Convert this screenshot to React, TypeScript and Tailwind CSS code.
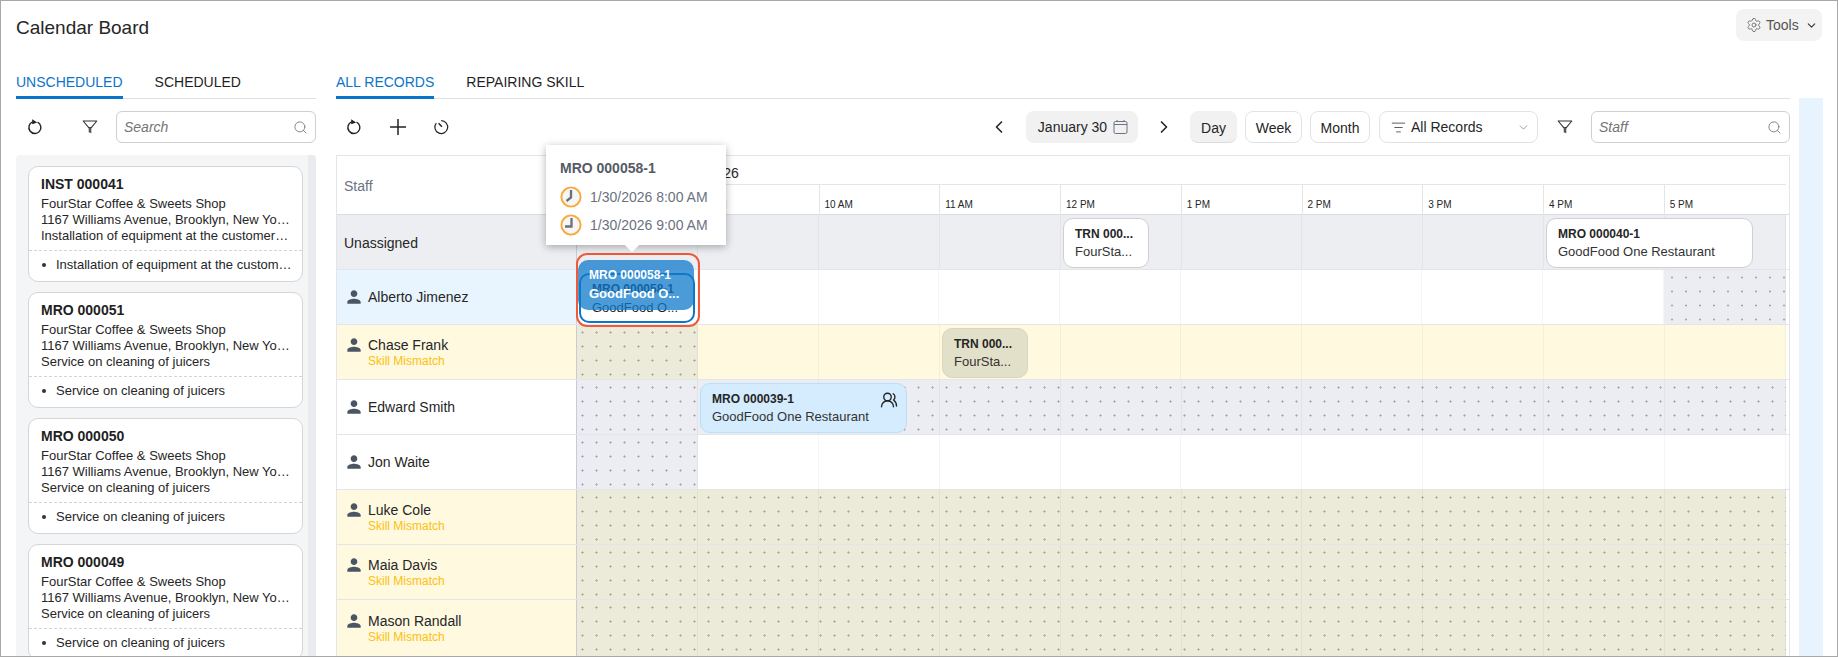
import { ChevronDown, ChevronLeft, ChevronRight, ListFilter, Search, Settings, UsersRound } from "lucide-react";

const font = { fontFamily: '"Liberation Sans", Arial, sans-serif' };

const hours = ["8 AM", "9 AM", "10 AM", "11 AM", "12 PM", "1 PM", "2 PM", "3 PM", "4 PM", "5 PM"];

const cards = [
  { id: "INST 000041", desc: "Installation of equipment at the customer's location", item: "Installation of equipment at the customer's location" },
  { id: "MRO 000051", desc: "Service on cleaning of juicers", item: "Service on cleaning of juicers" },
  { id: "MRO 000050", desc: "Service on cleaning of juicers", item: "Service on cleaning of juicers" },
  { id: "MRO 000049", desc: "Service on cleaning of juicers", item: "Service on cleaning of juicers" },
];

const grayDots =
  "bg-[#ecedf2] bg-[radial-gradient(circle_at_5.5px_7.5px,#a3a4a9_0.9px,transparent_1.2px)] bg-[length:14px_14px]";
const oliveDots =
  "bg-[#ecead8] bg-[radial-gradient(circle_at_5.5px_7.5px,#a6a698_0.9px,transparent_1.2px)] bg-[length:14px_14px]";
const grayDotsLate =
  "bg-[#ecedf2] bg-[radial-gradient(circle_at_8px_7.5px,#a3a4a9_0.9px,transparent_1.2px)] bg-[length:14px_14px]";

const spanClass: Record<number, string> = {
  1: "col-span-1",
  9: "col-span-9",
  10: "col-span-10",
};

type Row = {
  name: string;
  mismatch?: boolean;
  leftBg: string;
  segments: { span: number; cls: string }[];
};

const rows: Row[] = [
  { name: "Unassigned", leftBg: "bg-[#edeef2]", segments: [{ span: 10, cls: "bg-[#edeef2]" }] },
  {
    name: "Alberto Jimenez",
    leftBg: "bg-[#e8f5fe]",
    segments: [
      { span: 9, cls: "bg-white" },
      { span: 1, cls: grayDotsLate },
    ],
  },
  {
    name: "Chase Frank",
    mismatch: true,
    leftBg: "bg-[#fff9e0]",
    segments: [
      { span: 1, cls: oliveDots },
      { span: 9, cls: "bg-[#fff9e0]" },
    ],
  },
  { name: "Edward Smith", leftBg: "bg-white", segments: [{ span: 10, cls: grayDots }] },
  {
    name: "Jon Waite",
    leftBg: "bg-white",
    segments: [
      { span: 1, cls: grayDots },
      { span: 9, cls: "bg-white" },
    ],
  },
  { name: "Luke Cole", mismatch: true, leftBg: "bg-[#fff9e0]", segments: [{ span: 10, cls: oliveDots }] },
  { name: "Maia Davis", mismatch: true, leftBg: "bg-[#fff9e0]", segments: [{ span: 10, cls: oliveDots }] },
  { name: "Mason Randall", mismatch: true, leftBg: "bg-[#fff9e0]", segments: [{ span: 10, cls: oliveDots }] },
];

function RefreshIcon() {
  return (
    <svg width="18" height="18" viewBox="0 0 18 18" fill="none">
      <path d="M6.6 3.9a6 6 0 1 0 5 .2" stroke="#222" strokeWidth="1.4" />
      <path d="M6.2 1.2l5 3.2-5 1.8z" fill="#222" />
    </svg>
  );
}

function TimerIcon() {
  return (
    <svg width="18" height="18" viewBox="0 0 18 18" fill="none" stroke="#222" strokeWidth="1.2">
      <path d="M8.2 2.7a6.4 6.4 0 1 1-4.9 2.4" />
      <path d="M5.6 5.2l3.3 3.6" strokeWidth="1.4" />
    </svg>
  );
}

function PlusIcon() {
  return (
    <svg width="18" height="18" viewBox="0 0 18 18" stroke="#222" strokeWidth="1.5">
      <path d="M9 1v16M1 9h16" />
    </svg>
  );
}

function FunnelIcon() {
  return (
    <svg width="16" height="16" viewBox="0 0 16 16" fill="none">
      <path d="M1.2 2h13.6L9.3 8.6H6.7z" stroke="#333" strokeWidth="1.1" strokeLinejoin="round" />
      <path d="M6.7 8.6h2.6v5.6l-2.6-.9z" fill="#555" />
    </svg>
  );
}

function CalendarIcon() {
  return (
    <svg width="15" height="16" viewBox="0 0 15 16" fill="none" stroke="#6b7280" strokeWidth="1">
      <rect x="1" y="2.5" width="13" height="12" rx="1.5" />
      <path d="M1 5.5h13M4 1v1.5M11 1v1.5" />
    </svg>
  );
}

function PersonIcon() {
  return (
    <svg width="20" height="20" viewBox="0 0 24 24" fill="#4b5563" className="shrink-0">
      <path d="M12 12c2.2 0 4-1.8 4-4s-1.8-4-4-4-4 1.8-4 4 1.8 4 4 4zm0 2c-2.7 0-8 1.3-8 4v2h16v-2c0-2.7-5.3-4-8-4z" />
    </svg>
  );
}

function ClockIcon({ hand }: { hand: string }) {
  return (
    <svg width="22" height="22" viewBox="0 0 22 22" fill="none" className="shrink-0">
      <circle cx="11" cy="11" r="9.6" fill="#f6f6f7" stroke="#f9a93a" strokeWidth="1.9" />
      <path d={hand} stroke="#6b6f76" strokeWidth="2.3" />
    </svg>
  );
}

function SearchBox({ placeholder, width }: { placeholder: string; width: string }) {
  return (
    <div className={`flex h-8 items-center rounded-md border border-[#cfcfcf] bg-white pl-[7px] pr-[7px] ${width}`}>
      <input
        readOnly
        placeholder={placeholder}
        className="w-full min-w-0 text-sm italic outline-none placeholder:text-[#757575]"
        style={font}
      />
      <Search size={15} strokeWidth={1.4} className="shrink-0 text-[#777]" />
    </div>
  );
}

function Tab({ label, active }: { label: string; active?: boolean }) {
  return (
    <div
      className={
        active
          ? "flex h-[33px] items-center border-b-[3px] border-[#0a74c9] pt-[1px] text-sm text-[#0a74c9]"
          : "flex h-[33px] items-center pb-[2px] text-sm text-[#1f1f1f]"
      }
    >
      {label}
    </div>
  );
}

function WorkCard({ id, desc, item }: { id: string; desc: string; item: string }) {
  return (
    <div className="h-[116px] w-[275px] shrink-0 rounded-[10px] border border-[#d6d6d6] bg-white">
      <div className="h-[84px] border-b border-dashed border-[#d4d4d4] pl-3 pr-[12px] pt-[9px] text-[13px] leading-4 text-[#262626]">
        <div className="text-sm font-bold leading-[17px] text-[#1f1f1f]">{id}</div>
        <div className="mt-[3px] truncate">FourStar Coffee & Sweets Shop</div>
        <div className="truncate">1167 Williams Avenue, Brooklyn, New York, 11201</div>
        <div className="truncate">{desc}</div>
      </div>
      <div className="flex h-[28px] items-center pl-[13px] pr-[10px] text-[13px] text-[#262626]">
        <span className="mr-[10px] h-1 w-1 shrink-0 rounded-full bg-[#333]" />
        <span className="truncate">{item}</span>
      </div>
    </div>
  );
}

function EventCard({ title, sub, cls, icon }: { title: string; sub: string; cls: string; icon?: boolean }) {
  return (
    <div className={`absolute top-[3px] z-10 h-[50px] rounded-[10px] border pl-[11px] pt-[7px] ${cls}`}>
      <div className="text-xs font-bold leading-[17px] text-[#262626]">{title}</div>
      <div className="text-[13px] leading-[17px] text-[#333]">{sub}</div>
      {icon && <UsersRound size={18} strokeWidth={1.8} className="absolute right-[8px] top-[7px] text-[#222]" />}
    </div>
  );
}

function DragStack() {
  return (
    <>
      <div className="absolute left-[-1px] top-[-17px] z-10 h-[74px] w-[124px] rounded-[11px] border-2 border-[#f0593a]" />
      <div className="absolute left-[2px] top-[3px] z-10 h-[50px] w-[116px] rounded-[10px] border-2 border-[#0a78c8] bg-white pl-[11px] pt-[5px]">
        <div className="text-xs font-bold leading-[18px] text-[#1f1f1f]">MRO 000058-1</div>
        <div className="text-[13px] leading-[19px] text-[#1f1f1f]">GoodFood O...</div>
      </div>
      <div className="absolute left-[1px] top-[-10px] z-10 h-[50px] w-[116px] rounded-[10px] bg-[#0f7acc]/75 pl-[11px] pt-[6px] text-white">
        <div className="text-xs font-bold leading-[18px]">MRO 000058-1</div>
        <div className="text-[13px] font-bold leading-[19px]">GoodFood O...</div>
      </div>
    </>
  );
}

function TimelineRow({ row, index }: { row: Row; index: number }) {
  return (
    <div className="flex h-[55px] border-b border-[#e4e5e9] last:h-[56px] last:border-b-0">
      <div className={`flex w-[240px] shrink-0 flex-col justify-center border-r border-[#c9ccd4] ${row.leftBg}`}>
        {row.name === "Unassigned" ? (
          <div className="pl-[7px] pt-[2px] text-sm text-[#262626]">{row.name}</div>
        ) : (
          <>
            <div className="flex h-[18px] items-center gap-1 pl-[7px] text-sm text-[#262626]">
              <PersonIcon />
              {row.name}
            </div>
            {row.mismatch && <div className="h-[15px] pl-[31px] text-xs leading-[15px] text-[#fdc010]">Skill Mismatch</div>}
          </>
        )}
      </div>
      <div className="relative grid w-[1209px] grid-cols-[repeat(9,120.75px)_1fr]">
        {row.segments.map((s, i) => (
          <div key={i} className={`flex ${spanClass[s.span]} ${s.cls}`}>
            {Array.from({ length: s.span }).map((_, c) => (
              <div key={c} className="flex-1 border-r border-black/[0.04]" />
            ))}
          </div>
        ))}
        {index === 0 && (
          <>
            <EventCard title="TRN 000..." sub="FourSta..." cls="left-[486px] w-[86px] border-[#cfcfd4] bg-white" />
            <EventCard title="MRO 000040-1" sub="GoodFood One Restaurant" cls="left-[969px] w-[207px] border-[#cfcfd4] bg-white" />
          </>
        )}
        {index === 1 && <DragStack />}
        {index === 2 && <EventCard title="TRN 000..." sub="FourSta..." cls="left-[365px] w-[86px] border-[#d9d6bd] bg-[#e3e0c9]" />}
        {index === 3 && (
          <EventCard title="MRO 000039-1" sub="GoodFood One Restaurant" cls="left-[123px] w-[207px] border-[#b9e0f9] bg-[#d4ecfd]" icon />
        )}
      </div>
    </div>
  );
}

function Tooltip() {
  return (
    <div className="absolute left-[210px] top-[-10px] z-20 h-[100px] w-[180px] bg-white pl-[14px] pt-[14px] shadow-[0_2px_8px_rgba(0,0,0,0.3)]">
      <div className="absolute bottom-[-5px] left-[81px] h-[10px] w-[10px] rotate-45 bg-white" />
      <div className="relative text-sm font-bold leading-[18px] text-[#555b66]">MRO 000058-1</div>
      <div className="relative mt-[6px] flex h-7 items-center gap-2 text-sm text-[#6b7280]">
        <ClockIcon hand="M11 4V11.5L6.5 15" />
        1/30/2026 8:00 AM
      </div>
      <div className="relative flex h-7 items-center gap-2 text-sm text-[#6b7280]">
        <ClockIcon hand="M11.5 4V12.5H5" />
        1/30/2026 9:00 AM
      </div>
    </div>
  );
}

export default function App() {
  return (
    <div className="h-[657px] w-full overflow-hidden border border-[#a8a8a8] bg-white" style={font}>
      <div className="flex h-[65px] items-start justify-between pl-[15px] pr-[15px]">
        <h1 className="mt-[16px] text-[19px] leading-[22px] text-[#262626]">Calendar Board</h1>
        <div className="mt-2 flex h-8 w-[86px] items-center rounded-lg bg-[#f3f3f3] pl-[10px] text-sm text-[#555]">
          <Settings size={16} strokeWidth={1.1} className="mr-1" />
          Tools
          <ChevronDown size={13} strokeWidth={2} className="ml-[6px] text-[#333]" />
        </div>
      </div>

      <div className="flex pl-[15px]">
        {/* Work order list */}
        <div className="w-[300px] shrink-0">
          <div className="flex h-[33px] gap-[32px] border-b border-[#e0e0e0]">
            <Tab label="UNSCHEDULED" active />
            <Tab label="SCHEDULED" />
          </div>
          <div className="flex h-[56px] items-center">
            <div className="flex h-8 w-[38px] items-center justify-center"><RefreshIcon /></div>
            <div className="ml-[18px] flex h-8 w-9 items-center justify-center"><FunnelIcon /></div>
            <div className="ml-2"><SearchBox placeholder="Search" width="w-[200px]" /></div>
          </div>
          <div className="flex h-[502px] overflow-hidden rounded-t bg-[#f4f5f7]">
            <div className="flex w-[292px] flex-col gap-[10px] pl-3 pt-[11px]">
              {cards.map((c) => (
                <WorkCard key={c.id} {...c} />
              ))}
            </div>
            <div className="w-2 bg-[#e9ebee]" />
          </div>
        </div>

        {/* Calendar */}
        <div className="ml-5 w-[1454px] shrink-0">
          <div className="flex h-[33px] gap-[32px] border-b border-[#e0e0e0]">
            <Tab label="ALL RECORDS" active />
            <Tab label="REPAIRING SKILL" />
          </div>
          <div className="flex h-[56px] items-center text-sm text-[#262626]">
            <div className="flex h-8 w-9 items-center justify-center"><RefreshIcon /></div>
            <div className="ml-2 flex h-8 w-9 items-center justify-center"><PlusIcon /></div>
            <div className="ml-2 flex h-8 w-9 items-center justify-center"><TimerIcon /></div>
            <div className="ml-auto flex h-8 w-8 items-center justify-center"><ChevronLeft size={20} strokeWidth={2} /></div>
            <div className="ml-[11px] flex h-8 w-[112px] items-center justify-center gap-[6px] rounded-lg bg-[#f1f1f1] pl-[2px]">
              January 30
              <CalendarIcon />
            </div>
            <div className="ml-[10px] flex h-8 w-8 items-center justify-center"><ChevronRight size={20} strokeWidth={2} /></div>
            <div className="ml-[10px] flex h-8 w-[47px] items-center justify-center rounded-lg border-b border-[#dcdcdc] bg-[#f1f1f1] pt-[2px]">Day</div>
            <div className="ml-2 flex h-8 w-[57px] items-center justify-center rounded-lg border border-[#e3e3e3] pt-[2px]">Week</div>
            <div className="ml-2 flex h-8 w-[60px] items-center justify-center rounded-lg border border-[#e3e3e3] pt-[2px]">Month</div>
            <div className="ml-[9px] flex h-8 w-[159px] items-center rounded-lg border border-[#e3e3e3] pl-[11px] pr-[7px]">
              <ListFilter size={15} strokeWidth={1.5} className="mr-[5px] text-[#555]" />
              All Records
              <ChevronDown size={13} strokeWidth={1.2} className="ml-auto text-[#666]" />
            </div>
            <div className="ml-[11px] flex h-8 w-8 items-center justify-center"><FunnelIcon /></div>
            <div className="ml-[10px]"><SearchBox placeholder="Staff" width="w-[199px]" /></div>
          </div>

          <div className="relative">
            <Tooltip />
            <div className="border-l border-r border-t border-[#e4e5e9]">
              <div className="flex h-[59px] border-b border-[#dcdde2]">
                <div className="flex w-[240px] shrink-0 items-center pl-[7px] pt-[2px] text-sm text-[#6b7280]">Staff</div>
                <div className="w-[1209px]">
                  <div className="flex h-[29px] items-center justify-start border-b border-[#e4e5e9] pl-2 pt-[5px] text-sm text-[#262626]">
                    Friday, January 30, 2026
                  </div>
                  <div className="grid h-[30px] grid-cols-[repeat(9,120.75px)_1fr]">
                    {hours.map((h) => (
                      <div key={h} className="flex items-end border-l border-[#e4e5e9] pb-[3px] pl-[5px] text-[10px] leading-[14px] text-[#262626]">
                        {h}
                      </div>
                    ))}
                  </div>
                </div>
              </div>
              {rows.map((r, i) => (
                <TimelineRow key={r.name} row={r} index={i} />
              ))}
            </div>
          </div>
        </div>

        <div className="ml-[9px] mt-[32px] h-[560px] w-6 shrink-0 bg-[#e8f4fd]" />
      </div>
    </div>
  );
}
